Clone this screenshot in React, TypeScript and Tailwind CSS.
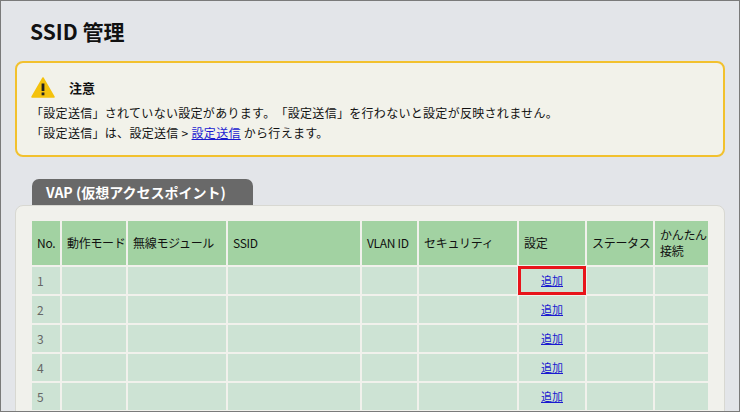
const cols = [
  { label: "No.", w: 28 },
  { label: "動作モード", w: 64 },
  { label: "無線モジュール", w: 98 },
  { label: "SSID", w: 132 },
  { label: "VLAN ID", w: 55 },
  { label: "セキュリティ", w: 98 },
  { label: "設定", w: 66 },
  { label: "ステータス", w: 66 },
  { label: "かんたん接続", w: 53 },
];

const font = { fontFamily: '"Noto Sans CJK JP", "Noto Sans", sans-serif' };

export default function App() {
  return (
    <div
      className="w-[740px] h-[412px] overflow-hidden border border-[#7a7a7a] bg-[#e3e5e9] relative [text-spacing-trim:space-all]"
      style={font}
    >
      <div className="px-[14px]">
        <h1 className="pt-[14px] pl-[15px] text-[21px] font-bold text-[#111] leading-[32px]">SSID 管理</h1>
        <div className="mt-[14px] h-[96px] rounded-[8px] border-2 border-[#f2c12e] bg-[#f2f2ea] px-[14px] pt-[14px]">
          <div className="flex items-center gap-[14px]">
            <svg width="24" height="21" viewBox="0 0 24 21">
              <path d="M12 1 L23 20 H1 Z" fill="#f4c20d" stroke="#f4c20d" strokeLinejoin="round" strokeWidth="1.5" />
              <rect x="10.6" y="6.5" width="2.8" height="7.5" fill="#222" />
              <rect x="10.6" y="15.5" width="2.8" height="2.8" fill="#222" />
            </svg>
            <span className="text-[13px] font-bold text-[#111]">注意</span>
          </div>
          <div className="mt-[5px] text-[12px] leading-[20px] text-[#111] tracking-[0.3px]">
            <div>「設定送信」されていない設定があります。「設定送信」を行わないと設定が反映されません。</div>
            <div>
              「設定送信」は、設定送信 &gt; <span className="text-[#1a1ad0] underline">設定送信</span> から行えます。
            </div>
          </div>
        </div>
        <div className="mt-[22px] ml-[17px] w-[221px] h-[26px] rounded-t-[7px] bg-[#696969] flex items-center pl-[14px] text-[14px] font-bold text-white">
          VAP (仮想アクセスポイント)
        </div>
        <div className="h-[230px] rounded-t-[8px] bg-[#f1f1ec] border border-[#d8d8d2] pt-[15px] pl-[16px]">
          <div className="flex flex-col gap-[2px] w-[676px]">
            <div className="flex gap-[2px] h-[44px]">
              {cols.map((c) => (
                <div
                  key={c.label}
                  className="bg-[#a2d2a2] text-[12px] text-[#111] flex items-center pl-[5px] leading-[16px] whitespace-nowrap overflow-hidden tracking-[-0.3px]"
                  style={{ width: c.w }}
                >
                  {c.label === "かんたん接続" ? (
                    <span>かんたん<br />接続</span>
                  ) : (
                    c.label
                  )}
                </div>
              ))}
            </div>
            {[1, 2, 3, 4, 5].map((n) => (
              <div key={n} className="flex gap-[2px] h-[27px]">
                {cols.map((c, i) => (
                  <div
                    key={c.label}
                    className={`bg-[#cde3d4] text-[12px] flex items-center ${
                      i === 6 ? "justify-center" : "pl-[5px]"
                    } ${i === 6 && n === 1 ? "outline-3 outline-[#e8141a] -outline-offset-2" : ""}`}
                    style={{ width: c.w }}
                  >
                    {i === 0 && <span className="text-[#666]">{n}</span>}
                    {i === 6 && <span className="text-[#1a1ad0] underline text-[11px]">追加</span>}
                  </div>
                ))}
              </div>
            ))}
          </div>
        </div>
      </div>
    </div>
  );
}
